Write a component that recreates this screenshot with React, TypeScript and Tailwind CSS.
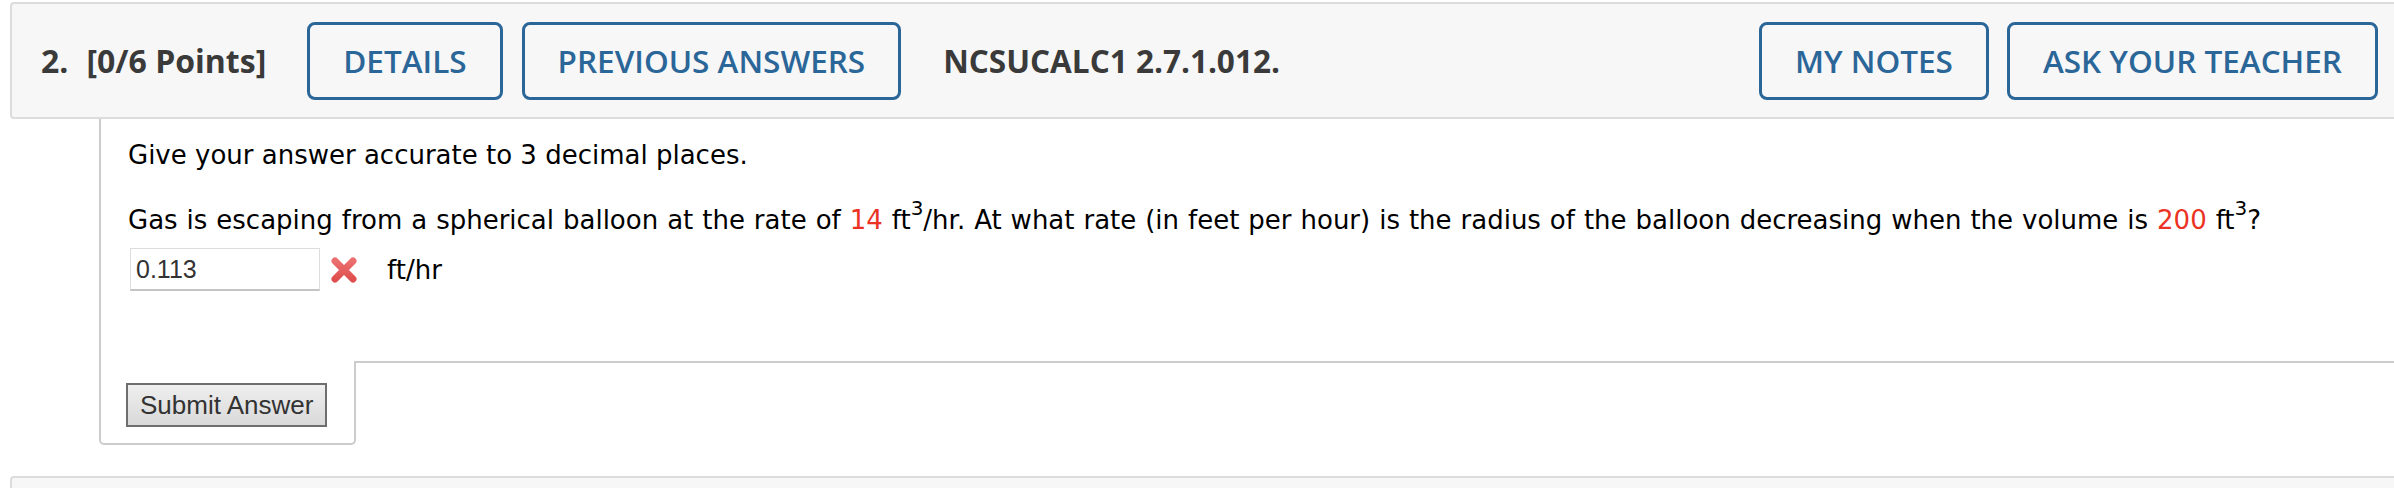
import React from 'react';

const openSans = { fontFamily: '"Open Sans", "Noto Sans", sans-serif' };

const HeaderButton: React.FC<{ label: string }> = ({ label }) => (
    <button
        className="h-[78px] px-[33px] rounded-[8px] border-[3px] border-[#2b6699] text-[#2b6699] text-[31.5px] font-semibold leading-none bg-transparent"
        style={openSans}
    >
        {label}
    </button>
);

const WrongMark: React.FC = () => (
    <svg width="28" height="26" viewBox="0 0 28 26" className="shrink-0">
        <defs>
            <linearGradient id="xg" x1="0" y1="0" x2="0" y2="1">
                <stop offset="0" stopColor="#ec6f6f" />
                <stop offset="1" stopColor="#df4f4f" />
            </linearGradient>
        </defs>
        <path d="M5 4 L23 22 M23 4 L5 22" stroke="url(#xg)" strokeWidth="7" strokeLinecap="round" fill="none" />
    </svg>
);

export default function App() {
    const red = 'text-[#eb3223]';
    return (
        <div className="w-full h-[488px] overflow-hidden bg-white">
            {/* question header */}
            <div
                className="ml-[10px] mt-[2px] -mr-6 h-[117px] flex items-center rounded-[4px] border-2 border-[#dcdcdc] bg-[#f7f7f7] pl-[29px]"
                style={openSans}
            >
                <span className="text-[32px] font-bold text-[#3a3a3a]">2.</span>
                <span className="ml-[18px] text-[32px] font-bold text-[#3a3a3a]">[0/6 Points]</span>
                <div className="ml-[41px] flex items-center gap-[19px]">
                    <HeaderButton label="DETAILS" />
                    <HeaderButton label="PREVIOUS ANSWERS" />
                </div>
                <span className="ml-[42px] text-[31.5px] font-bold text-[#3a3a3a]">NCSUCALC1 2.7.1.012.</span>
                <div className="ml-auto mr-[38px] flex items-center gap-[18px]">
                    <HeaderButton label="MY NOTES" />
                    <HeaderButton label="ASK YOUR TEACHER" />
                </div>
            </div>

            {/* question body */}
            <div className="ml-[99px]" style={{ fontFamily: '"DejaVu Sans", Verdana, sans-serif' }}>
                <div className="border-l-2 border-[#cccccc] pl-[27px] pt-[18px] pb-[70px] text-[26px] leading-[36px] text-black">
                    <p>Give your answer accurate to 3 decimal places.</p>
                    <p className="mt-[29px] [word-spacing:0.7px]">
                        Gas is escaping from a spherical balloon at the rate of <span className={red}>14</span> ft
                        <sup className="text-[20px] -top-[14px]">3</sup>/hr. At what rate (in feet per hour) is the radius of
                        the balloon decreasing when the volume is <span className={red}>200</span> ft
                        <sup className="text-[20px] -top-[14px]">3</sup>?
                    </p>
                    <div className="mt-[10px] flex items-center">
                        <input
                            type="text"
                            readOnly
                            value="0.113"
                            className="ml-[2px] w-[190px] h-[43px] px-[5px] border border-[#dddddd] border-b-2 border-b-[#c4c4c4] text-[25px] text-[#333] bg-white outline-none"
                            style={{ fontFamily: '"Liberation Sans", Arial, sans-serif' }}
                        />
                        <span className="ml-[10px] flex items-center">
                            <WrongMark />
                        </span>
                        <span className="ml-[29px]">ft/hr</span>
                    </div>
                </div>
                <div className="flex -mr-6">
                    <div className="w-[257px] h-[84px] border-2 border-t-0 border-[#cccccc] rounded-b-[5px] pl-[25px] pt-[22px]">
                        <button
                            className="h-[44px] px-[12px] border-2 border-[#6e6e6e] bg-gradient-to-b from-[#efefef] to-[#d9d9d9] text-[26px] leading-none text-[#333]"
                            style={{ fontFamily: '"Liberation Sans", Arial, sans-serif' }}
                        >
                            Submit Answer
                        </button>
                    </div>
                    <div className="flex-1 border-t-2 border-[#cccccc]" />
                </div>
            </div>

            {/* next question header */}
            <div className="ml-[10px] mt-[31px] -mr-6 h-[60px] rounded-t-[4px] border-2 border-[#dcdcdc] bg-[#f7f7f7]" />
        </div>
    );
}
